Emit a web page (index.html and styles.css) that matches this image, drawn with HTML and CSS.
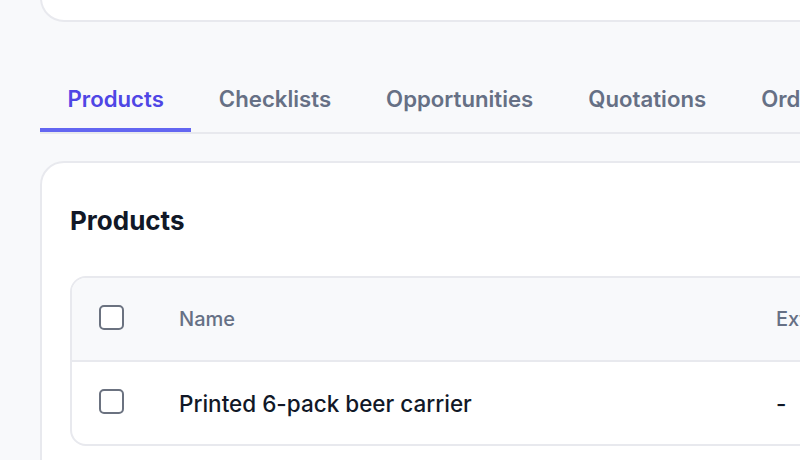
FILE: index.html
```html
<!DOCTYPE html>
<html lang="en">
<head>
<meta charset="utf-8">
<title>Products</title>
<link rel="stylesheet" href="styles.css">
</head>
<body>
<div class="page">
  <div class="top-card"></div>
  <nav class="tabs">
    <a class="tab active">Products</a>
    <a class="tab">Checklists</a>
    <a class="tab">Opportunities</a>
    <a class="tab">Quotations</a>
    <a class="tab">Orders</a>
  </nav>
  <section class="card">
    <h2 class="card-title">Products</h2>
    <div class="table">
      <div class="row head">
        <div class="cell check"><span class="box"></span></div>
        <div class="cell name">Name</div>
        <div class="cell ext">External ID</div>
      </div>
      <div class="row">
        <div class="cell check"><span class="box"></span></div>
        <div class="cell name">Printed 6-pack beer carrier</div>
        <div class="cell ext">-</div>
      </div>
    </div>
  </section>
</div>
</body>
</html>
```
FILE: styles.css
```css
html, body {
  margin: 0;
  padding: 0;
}
body {
  background: #f8f9fb;
  font-family: Inter, "Noto Sans", sans-serif;
  width: 800px;
  height: 460px;
  overflow: hidden;
}
.page {
  padding: 0 0 0 40px;
  width: 1200px;
}
.top-card {
  height: 82px;
  margin-top: -60px;
  background: #fff;
  border: 2px solid #e8e9ee;
  border-radius: 24px;
  box-sizing: border-box;
}
.tabs {
  margin-top: 62px;
  display: flex;
  border-bottom: 2px solid #e8e9ee;
}
.tab {
  display: block;
  padding: 0 27.5px 14px;
  line-height: 30px;
  font-size: 22.2px;
  font-weight: 600;
  color: #667085;
  border-bottom: 4px solid transparent;
  white-space: nowrap;
}
.tab.active {
  color: #4f46e5;
  border-bottom-color: #6366f1;
}
.card {
  margin-top: 27px;
  background: #fff;
  border: 2px solid #e8e9ee;
  border-radius: 24px;
  padding: 42px 28px 40px;
}
.card-title {
  margin: 0;
  font-size: 26px;
  line-height: 32px;
  font-weight: 700;
  color: #111827;
}
.table {
  margin-top: 39px;
  border: 2px solid #e8e9ee;
  border-radius: 16px;
  overflow: hidden;
}
.row {
  display: grid;
  grid-template-columns: 107px 597px 1fr;
  align-items: center;
  height: 82px;
}
.row.head {
  background: #f8f9fb;
  border-bottom: 2px solid #e8e9ee;
  height: 82px;
}
.cell {
  white-space: nowrap;
}
.check {
  padding-left: 27px;
  display: flex;
}
.box {
  width: 21px;
  height: 21px;
  border: 2px solid #6b7280;
  border-radius: 5px;
  background: #fff;
}
.head .check .box {
  margin-top: -4px;
}
.row:not(.head) .check .box {
  margin-top: -3px;
}
.head .cell.name, .head .cell.ext {
  font-size: 20px;
  font-weight: 500;
  color: #667085;
}
.row:not(.head) .cell.name, .row:not(.head) .cell.ext {
  font-size: 22.5px;
  font-weight: 500;
  color: #111827;
}
```
